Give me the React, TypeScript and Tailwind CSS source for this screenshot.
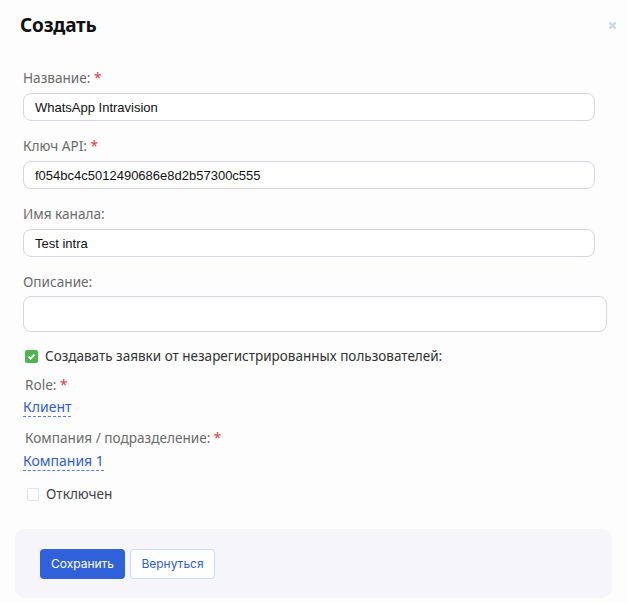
import { useState } from "react";

const labelCls = "block text-[13.6px] leading-[20px] text-[#6b6b6b]";
const inputCls =
  "block h-[28px] w-[572px] rounded-[8px] border border-[#d3d7de] bg-white px-[11px] text-[13px] text-[#111] outline-none font-['Liberation_Sans',Arial,sans-serif]";
const linkCls =
  "-ml-[2px] block w-fit border-b border-dashed border-[#5b7fe0] text-[14px] leading-[18px] text-[#2f5ed8]";

function Req() {
  return <span className="text-[#e53935]"> *</span>;
}

function Field({ label, required, value }: { label: string; required?: boolean; value: string }) {
  return (
    <div>
      <label className={labelCls}>
        {label}
        {required ? <Req /> : null}
      </label>
      <input className={`${inputCls} mt-[5px]`} defaultValue={value} readOnly />
    </div>
  );
}

export default function App() {
  const [create, setCreate] = useState(true);
  const [off, setOff] = useState(false);

  return (
    <div className="h-[603px] w-[627px] overflow-hidden bg-[#fdfdfd] font-['Noto_Sans',sans-serif]">
      <div className="flex items-start justify-between pl-[20px] pr-[10px] pt-[12px]">
        <h1 className="text-[19px] font-bold leading-[26px] tracking-[-0.2px] text-[#111]">Создать</h1>
        <button type="button" className="mt-[9px] text-[#cfd7ea]" aria-label="Close">
          <svg className="h-[9px] w-[9px]" viewBox="0 0 10 10" fill="none" stroke="currentColor" strokeWidth="2.6" aria-hidden>
            <path d="M1.5 1.5l7 7M8.5 1.5l-7 7" />
          </svg>
        </button>
      </div>

      <div className="mt-[30px] flex flex-col gap-[15px] px-[23px]">
        <Field label="Название:" required value="WhatsApp Intravision" />
        <Field label="Ключ API:" required value="f054bc4c5012490686e8d2b57300c555" />
        <Field label="Имя канала:" value="Test intra" />
        <div>
          <label className={labelCls}>Описание:</label>
          <textarea
            className="mt-[4px] block h-[36px] w-[584px] resize-none rounded-[8px] border border-[#d3d7de] bg-white outline-none"
            readOnly
          />
        </div>
      </div>

      <div className="mt-[14px] px-[25px]">
        <label className="flex items-center gap-[7px] text-[13.5px] leading-[20px] text-[#333]" onClick={() => setCreate(!create)}>
          <span className="flex h-[13px] w-[13px] items-center justify-center rounded-[2px] bg-[#4fb34f]">
            {create ? (
              <svg className="h-[9px] w-[9px]" viewBox="0 0 10 10" fill="none" stroke="white" strokeWidth="2" aria-hidden>
                <path d="M1.8 5.2l2.2 2.2 4.2-4.6" />
              </svg>
            ) : null}
          </span>
          Создавать заявки от незарегистрированных пользователей:
        </label>

        <div className={`${labelCls} mt-[9px]`}>
          Role:
          <Req />
        </div>
        <a href="#" className={`${linkCls} mt-[3px]`}>
          Клиент
        </a>

        <div className={`${labelCls} mt-[11px]`}>
          Компания / подразделение:
          <Req />
        </div>
        <a href="#" className={`${linkCls} mt-[4px]`}>
          Компания 1
        </a>

        <label className="mt-[13px] flex items-center gap-[7px] pl-[2px] text-[13.6px] leading-[20px] text-[#444]" onClick={() => setOff(!off)}>
          <span className="h-[13px] w-[12px] rounded-[2px] border border-[#dfe3ea] bg-white" />
          Отключен
        </label>
      </div>

      <div className="mx-[15px] mt-[25px] flex h-[69px] items-center gap-[5px] rounded-[10px] bg-[#f5f5fa] px-[25px] font-['Inter',sans-serif]">
        <button type="button" className="h-[30px] w-[85px] rounded-[4px] bg-[#3161d9] text-[12px] text-white">
          Сохранить
        </button>
        <button type="button" className="h-[30px] w-[85px] rounded-[4px] border border-[#cdd8f3] bg-white text-[12px] text-[#2f5ed8]">
          Вернуться
        </button>
      </div>
    </div>
  );
}
